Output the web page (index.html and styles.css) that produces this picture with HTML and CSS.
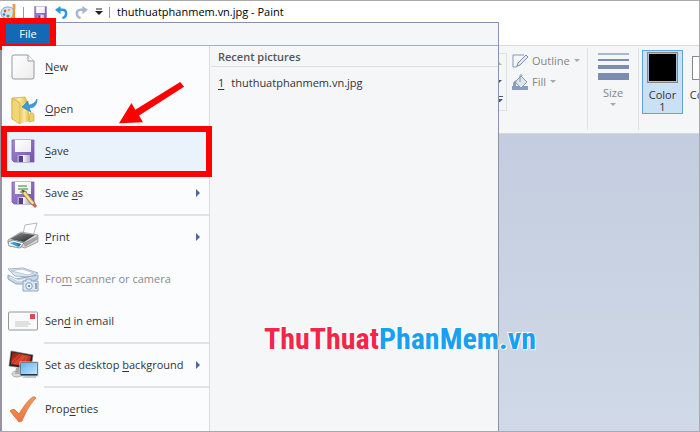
FILE: index.html
```html
<!DOCTYPE html>
<html lang="en">
<head>
<meta charset="utf-8">
<title>thuthuatphanmem.vn.jpg - Paint</title>
<link rel="stylesheet" href="styles.css">
</head>
<body>
<svg class="defs" aria-hidden="true">
  <defs>
    <linearGradient id="purple" x1="0" y1="0" x2="1" y2="1"><stop offset="0" stop-color="#a88ad4"/><stop offset="1" stop-color="#7450ae"/></linearGradient>
    <linearGradient id="paper" x1="0" y1="0" x2="1" y2="1"><stop offset="0" stop-color="#ffffff"/><stop offset="1" stop-color="#ececec"/></linearGradient>
    <linearGradient id="metal" x1="0" y1="0" x2="1" y2="0"><stop offset="0" stop-color="#8d93a0"/><stop offset=".5" stop-color="#f2f2f5"/><stop offset="1" stop-color="#a9afba"/></linearGradient>
    <linearGradient id="folder" x1="0" y1="0" x2="1" y2="0"><stop offset="0" stop-color="#edc95e"/><stop offset=".5" stop-color="#fbe9a2"/><stop offset="1" stop-color="#e4b944"/></linearGradient>
    <linearGradient id="dark" x1="0" y1="0" x2="1" y2="1"><stop offset="0" stop-color="#8f9090"/><stop offset="1" stop-color="#202123"/></linearGradient>
    <linearGradient id="screen" x1="0" y1="0" x2="1" y2="1"><stop offset="0" stop-color="#64b2f3"/><stop offset="1" stop-color="#bfe6ff"/></linearGradient>
    <linearGradient id="red" x1="0" y1="0" x2="1" y2="1"><stop offset="0" stop-color="#7c150e"/><stop offset=".5" stop-color="#dc4027"/><stop offset="1" stop-color="#8b1710"/></linearGradient>
    <linearGradient id="orange" x1="0" y1="0" x2="0" y2="1"><stop offset="0" stop-color="#f69a5c"/><stop offset="1" stop-color="#ee733c"/></linearGradient>
    <g id="floppy">
      <path d="M5 5h22v22H7l-2-2z" fill="url(#purple)" stroke="#7c5cb2" stroke-width=".8"/>
      <path d="M8 5h16v12H8z" fill="url(#paper)"/>
      <path d="M10 20h13v7H10z" fill="url(#metal)"/>
      <path d="M12 21h4v6h-4z" fill="#5d3b90"/>
    </g>
  </defs>
</svg>
<div class="window">
  <header class="titlebar">
    <svg class="app-icon" viewBox="0 0 17 18" aria-hidden="true">
      <path d="M1 10C1 6 4 4 8 4c4 0 6 2 6 6 0 3-3 6-7 6-2 0-2-2-4-2-1 0-2-2-2-4z" fill="#d4e8f4" stroke="#70a5c8"/>
      <circle cx="5" cy="8" r="1.400" fill="#e6543a"/><circle cx="9" cy="7" r="1.300" fill="#edb33c"/><circle cx="4" cy="11.500" r="1.300" fill="#4379cc"/><circle cx="8" cy="13" r="1.600" fill="#48a45c"/>
      <path d="M14 1v6" stroke="#e5a357" stroke-width="3"/><path d="M13 7l-1 9h3V7z" fill="#e99535"/>
    </svg>
    <i class="bar"></i>
    <button class="quick save" type="button" aria-label="Save"><svg viewBox="4 4 24 24"><use href="#floppy"/></svg></button>
    <button class="quick" type="button" aria-label="Undo"><svg viewBox="0 0 14 14"><path d="M3 4h5c3 0 4 2 4 4s-1 4-4 5" fill="none" stroke="#2998e2" stroke-width="2.600"/><path d="M0 4l6-4v9z" fill="#2998e2"/></svg></button>
    <button class="quick" type="button" aria-label="Redo"><svg viewBox="0 0 14 14"><path d="M11 4H6C3 4 2 6 2 8s1 4 4 5" fill="none" stroke="#a9b7ca" stroke-width="2.600"/><path d="M14 4L8 0v9z" fill="#a9b7ca"/></svg></button>
    <button class="quick more" type="button" aria-label="Customize toolbar"><svg viewBox="0 0 8 8"><path d="M1 1h6" stroke="#222"/><path d="M0 3h8L4 7z" fill="#222"/></svg></button>
    <i class="bar last"></i>
    <h1>thuthuatphanmem.vn.jpg - Paint</h1>
  </header>
  <div class="tabstrip"></div>
  <div class="ribbon">
    <div class="gallery" aria-hidden="true"><i class="up"></i><i></i><i class="all"></i></div>
    <div class="shape-tools">
      <button type="button" disabled><svg viewBox="0 0 16 16"><path d="M12 2H1v12h3l3-2" fill="none" stroke="#8597b5"/><path d="M5 13l1-3 8-8 2 2-8 8z" fill="#e0e8f0" stroke="#7d91b0"/></svg>Outline<i class="caret"></i></button>
      <button type="button" disabled><svg viewBox="0 0 16 16"><path d="M0 12h16v4H0z" fill="#8b9dbc"/><path d="M3 8l6-6 6 6-6 6z" fill="#dce7f0" stroke="#8799b3"/><path d="M8 8V2c0-2 2-2 2 0" fill="none" stroke="#7d91af"/><path d="M5 6C1 7 1 9 1 13h3c0-3 0-4 1-7z" fill="#8b9dbc"/></svg>Fill<i class="caret"></i></button>
    </div>
    <button class="size" type="button" disabled>
      <span class="lines"><i></i><i></i><i></i><i></i></span>Size<i class="caret"></i>
    </button>
    <div class="colors">
      <button class="color selected" type="button"><i class="swatch"></i>Color<br>1</button>
      <button class="color second" type="button"><i class="swatch"></i>Color<br>2</button>
    </div>
  </div>
  <main class="canvas"></main>

  <div class="file-menu">
    <div class="menu-top"><button class="file-tab" type="button">File</button></div>
    <div class="menu-body">
      <nav class="commands">
        <button type="button"><svg viewBox="0 0 32 32"><path d="M7 4h14l6 6v16q0 2-2 2H7q-2 0-2-2V6q0-2 2-2z" fill="url(#paper)" stroke="#9a9a9a"/><path d="M21 4v6h6" fill="#fff" stroke="#9a9a9a"/></svg><span><u>N</u>ew</span></button>
        <button type="button"><svg viewBox="0 0 32 32"><path d="M5 5l13-1 2 4v18l-8 2-7-2z" fill="url(#folder)" stroke="#d1a641" stroke-width=".7"/><path d="M5 5l8 5v21l-8-5z" fill="#f1d577" stroke="#cfa443" stroke-width=".7"/><path d="M13 11l9-1v18l-9 3z" fill="url(#folder)"/><path d="M23 20q4-1 4 3v5l-5 1z" fill="#efd067" stroke="#c49a35" stroke-width=".6"/><path d="M30 6c0 6-3 9-8 9l2 4-9-5 6-6v4c4 0 7-2 9-6z" fill="#3b9bdc" stroke="#217bb9" stroke-width=".6"/></svg><span><u>O</u>pen</span></button>
        <button class="marked" type="button"><svg viewBox="0 0 32 32"><use href="#floppy"/></svg><span><u>S</u>ave</span></button>
        <button type="button"><svg viewBox="0 0 32 32"><use href="#floppy"/><path d="M11 9h9M11 12h10M13 15h7" stroke="#65b662" stroke-width="1.300"/><path d="M15 13l3 1 10 12-3 2-10-12z" fill="#edcf75" stroke="#806139" stroke-width=".7"/><path d="M16 14l10 13" stroke="#fff0ad"/><path d="M15 13l3 1-2 2z" fill="#3f3e3b"/><path d="M25 28l3-2 2 3-2 2z" fill="#cd6256"/></svg><span>Save <u>a</u>s</span><i class="arrow"></i></button>
        <hr>
        <button type="button"><svg viewBox="0 0 32 32"><path d="M16 13l2-9 12-2-4 13z" fill="#fff" stroke="#a5a5a5" stroke-width=".8"/><path d="M1 19l13-8 17 3v7l-13 6-17-5z" fill="#d6d7d9" stroke="#888" stroke-width=".7"/><path d="M3 18l11-6 14 2-11 7z" fill="url(#dark)"/><path d="M16 22l15-7v3l-13 8z" fill="#a2a4a7"/><path d="M1 21l5-2 11 3-4 5-11-2z" fill="#eaf6fb" stroke="#777" stroke-width=".8"/><path d="M3 22l4-1 7 2-3 3z" fill="#3699df"/><path d="M9 22l5 1-2 3z" fill="#286f9f"/></svg><span><u>P</u>rint</span><i class="arrow"></i></button>
        <button type="button" disabled><svg viewBox="0 0 32 32"><path d="M1 6l15-1 15 5-8 4-15-1z" fill="#dce6f1" stroke="#a4b6cc"/><path d="M4 8l11-2 12 4-6 2z" fill="#fff" stroke="#bac7d8"/><path d="M1 12l8 4 22-4v4l-12 5H9l-8-5z" fill="#c8d6e7" stroke="#91a7c3"/><path d="M3 14l9 4 12-3" fill="none" stroke="#f6f9fc"/><path d="M16 18h3v-2h5v2h7v10H16z" fill="#dce7f2" stroke="#8fa5c3"/><circle cx="22" cy="23" r="3.300" fill="#f6faff" stroke="#8399bb"/><circle cx="22" cy="23" r="1.300" fill="#7a91b4"/><path d="M29 20v6" stroke="#7a91b4" stroke-width="1.500"/></svg><span>Fro<u>m</u> scanner or camera</span></button>
        <button type="button"><svg viewBox="0 0 32 32"><rect x="1.500" y="7" width="29" height="18" rx="1" fill="#fafafa" stroke="#969696"/><path d="M23 9h5v5h-5z" fill="#d54b55"/><path d="M8 17h14M8 19h16M8 21h13" stroke="#b9b9b9" stroke-width=".8"/></svg><span>Sen<u>d</u> in email</span></button>
        <hr>
        <button type="button"><svg viewBox="0 0 32 32"><ellipse cx="10" cy="25" rx="5" ry="3" fill="#d8dadb" stroke="#aaa"/><path d="M9 19h4v6H8z" fill="#aaa"/><path d="M4 2l22 4-2 14-22-3z" fill="#222" stroke="#777" stroke-width=".6"/><path d="M5 3l19 4-2 11L4 15z" fill="url(#red)"/><path d="M8 15l8-9M12 16l5-9M16 17l4-9M5 13l8-8" stroke="#ef6948" stroke-width=".6"/><path d="M18 27h11v2H15z" fill="#c4c9ce"/><rect x="13" y="13" width="18" height="14" fill="#26313b" stroke="#c4cad0"/><path d="M14 14h16v11H14z" fill="url(#screen)"/></svg><span>Set as desktop <u>b</u>ackground</span><i class="arrow"></i></button>
        <hr>
        <button type="button"><svg viewBox="0 0 32 32"><path d="M3 18c2-2 4-2 5-1l4 4C17 13 21 7 26 4q2-1 3 1C22 12 18 21 15 28l-3 1z" fill="url(#orange)" stroke="#c77349" stroke-width=".8"/></svg><span>Prop<u>e</u>rties</span></button>
      </nav>
      <section class="recent">
        <h2>Recent pictures</h2>
        <a href="#"><u>1</u><span>thuthuatphanmem.vn.jpg</span></a>
      </section>
    </div>
  </div>
  <svg class="pointer" viewBox="0 0 70 46" aria-hidden="true"><path d="M64 0l4 5-47 30 4 7L0 43 13 22l4 7z" fill="#f00"/></svg>
  <div class="watermark">ThuThuat<span>PhanMem.vn</span></div>
</div>
</body>
</html>
```
FILE: styles.css
```css
* { box-sizing: border-box; }
:root { --menu-width: 499px; }
body {
  margin: 0;
  font: 11px/16px "Open Sans", "Noto Sans", sans-serif;
  color: #333;
}
button { margin: 0; padding: 0; border: 0; background: none; font: inherit; color: inherit; }
svg { display: block; flex: none; }
.defs { position: absolute; width: 0; height: 0; }
.window {
  position: relative;
  display: flex;
  flex-direction: column;
  min-height: 100vh;
  overflow: hidden;
  border: 1px solid #aaaaac;
  border-left: 0;
  background: #fff;
}
.titlebar { display: flex; align-items: center; height: 22px; }
.app-icon { width: 17px; height: 18px; }
.bar { width: 1px; height: 11px; margin: 0 10px 0 6px; background: #999; }
.bar.last { margin: 0 7px 0 6px; }
.quick { display: flex; margin-right: 7px; }
.quick.save { margin-right: 8px; }
.quick svg { width: 13px; height: 13px; }
.quick.more { margin-right: 0; }
.quick.more svg { width: 8px; height: 8px; }
h1 { margin: 0; font-size: 11px; font-weight: 400; color: #000; white-space: nowrap; }
.tabstrip { height: 22px; }
.ribbon {
  display: flex;
  height: 89px;
  padding: 2px 0 3px var(--menu-width);
  border-top: 1px solid #dadbdc;
  border-bottom: 1px solid #d5d9df;
  background: #f5f6f7;
  color: #858585;
}
.gallery {
  display: flex;
  flex: none;
  flex-direction: column;
  align-items: flex-start;
  justify-content: space-around;
  width: 8px;
  height: 58px;
  margin-top: 5px;
  border: 1px solid #dcdfe3;
  border-left: 0;
}
.gallery i { border: solid transparent; border-width: 3px 3px 0 0; border-top-color: #46597c; }
.gallery .up { border-width: 0 3px 3px 0; border-bottom-color: #a9b4c5; }
.gallery .all { width: 4px; box-shadow: 0 -2px #f5f6f7, 0 -3px #46597c; }
.shape-tools { flex: none; width: 81px; padding: 2px 0 0 5px; border-right: 1px solid #dfe1e4; }
.shape-tools button { display: flex; align-items: center; height: 21px; gap: 4px; white-space: nowrap; font-size: 11px; }
.shape-tools svg { width: 16px; height: 16px; }
.caret { border: solid transparent; border-width: 3px 3px 0; border-top-color: #a8a8a8; }
.size { display: flex; flex: none; flex-direction: column; align-items: center; width: 51px; padding-top: 5px; border-right: 1px solid #dfe1e4; }
.lines { display: grid; gap: 4px; width: 31px; margin-bottom: 5px; }
.lines i { height: 2px; background: #7b8eb0; }
.lines i:first-child { background: #a9b8d0; }
.lines i:nth-child(3) { height: 4px; }
.lines i:nth-child(4) { height: 7px; }
.size .caret { margin-top: 2px; }
.colors { display: flex; padding: 2px 0 0 3px; color: #333; }
.color { flex: none; width: 41px; height: 64px; border: 1px solid transparent; line-height: 12px; }
.color.selected { border-color: #62a2e4; background: #c9e0f7; }
.swatch { display: block; width: 31px; height: 31px; margin: 0 auto 6px; border: 1px solid #888; background: #000; box-shadow: inset 0 0 0 1px #a8c0d7; }
.second .swatch { width: 24px; height: 24px; margin: 4px auto 9px; background: #fff; box-shadow: none; }
.canvas { flex: 1; background: linear-gradient(#c4cddf, #d0d9e7); }
.file-menu {
  position: absolute;
  top: 21px;
  bottom: 0;
  left: 0;
  display: flex;
  flex-direction: column;
  width: var(--menu-width);
  border: 1px solid #8595ae;
  border-left: 2px solid #9395a0;
  border-bottom: 0;
  background: #f5f6f7;
}
.menu-top { display: flex; flex: none; height: 23px; padding-left: 4px; border-bottom: 1px solid #a4b1c5; }
.file-tab { align-self: center; width: 44px; height: 20px; background: #1469b5; color: #fff; outline: 6px solid #f00; }
.menu-body { display: flex; flex: 1; }
.commands { display: flex; flex: none; flex-direction: column; width: 208px; border-right: 1px solid #d9dce1; background: #fbfcfe; }
.commands button { display: flex; flex: none; align-items: center; gap: 6px; height: 42px; padding-left: 5px; text-align: left; white-space: nowrap; }
.commands button:disabled { color: #8a8a8a; }
.commands svg { width: 32px; height: 32px; }
.commands hr { flex: none; width: 165px; height: 2px; margin: 0 0 0 42px; border: 0; background: #e1e3e6; }
.commands .marked { position: relative; background: #eaf2fb; }
.marked::after { content: ""; position: absolute; inset: -4px -3px -5px -1px; z-index: 1; border: 6px solid #f00; }
.arrow { margin: 0 9px 0 auto; border: solid transparent; border-width: 4px 0 4px 4px; border-left-color: #4d6694; }
u { text-underline-offset: 2px; }
.recent { flex: 1; min-width: 0; }
h2 { margin: 0 0 0 1px; padding: 3px 0 1px 7px; border-bottom: 1px solid #dadde2; font-size: 11px; font-weight: 600; color: #555; }
.recent a { display: flex; gap: 7px; padding: 8px; color: inherit; text-decoration: none; }
.pointer { position: absolute; left: 119px; top: 81px; width: 67px; height: 44px; }
.watermark {
  position: absolute;
  left: 264px;
  top: 319px;
  font: bold 30px/38px "Roboto Condensed", "Open Sans Condensed", "Liberation Sans Narrow", sans-serif;
  color: #f52549;
  white-space: nowrap;
  text-shadow: 0 0 2px #fff, 1px 1px #fff, -1px -1px #fff;
}
.watermark span { color: #18a0f1; }
```
